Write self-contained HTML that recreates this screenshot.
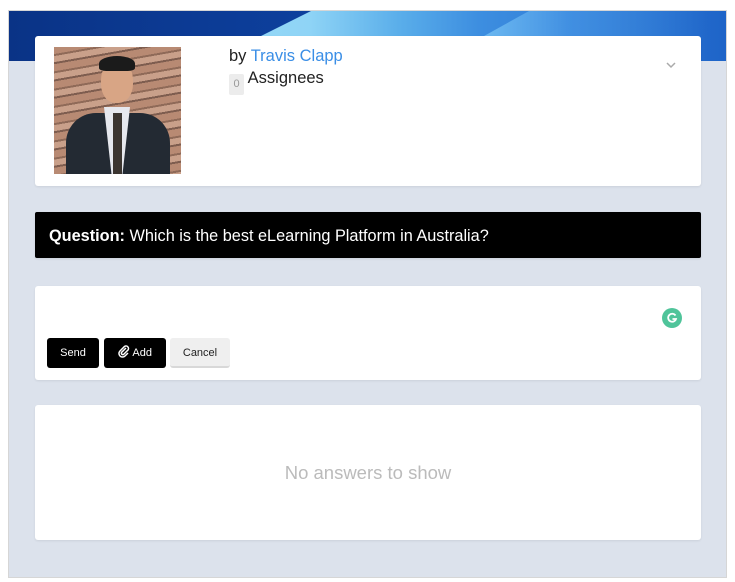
<!DOCTYPE html>
<html><head><meta charset="utf-8"><style>
*{box-sizing:border-box;margin:0;padding:0}
body{width:735px;height:582px;background:#fff;font-family:"Liberation Sans",Arial,sans-serif;position:relative;overflow:hidden}
.frame{position:absolute;left:8px;top:10px;width:719px;height:568px;border:1px solid #d6d6d6;background:#dce2ec;overflow:hidden}
.hdr{position:absolute;left:0;top:0;width:100%;height:50px;background:linear-gradient(90deg,#0a3386 0%,#0d3f9c 40%,#0d47aa 100%)}
.l1{position:absolute;left:0;top:0;width:100%;height:50px;background:linear-gradient(90deg,#a8e4fa 0px,#8fd4f6 300px,#5aaeea 390px,#3d8ee0 470px,#1e64c8 100%);clip-path:polygon(302px 0,100% 0,100% 50px,202px 50px)}
.l2{position:absolute;left:0;top:0;width:100%;height:50px;background:linear-gradient(90deg,rgba(150,210,245,.0) 0,rgba(120,195,245,.75) 480px,rgba(80,160,235,.5) 560px,rgba(30,90,200,0) 700px);clip-path:polygon(520px 0,100% 0,100% 50px,430px 50px)}
.card{position:absolute;background:#fff;border-radius:3px;box-shadow:0 1px 2px rgba(0,0,0,.08)}
.photo{position:absolute;left:19px;top:11px;width:127px;height:127px;background:repeating-linear-gradient(170deg,#b88a73 0 7px,#8f6a58 7px 9px,#c9a08a 9px 15px,#7e5d4f 15px 17px);overflow:hidden}
.head{position:absolute;left:47px;top:14px;width:32px;height:42px;border-radius:45%;background:#d8a585}
.hair{position:absolute;left:45px;top:9px;width:36px;height:15px;border-radius:50% 50% 20% 20%;background:#1b1b1b}
.suit{position:absolute;left:12px;top:66px;width:104px;height:70px;border-radius:30px 30px 0 0;background:#232a33}
.shirt{position:absolute;left:50px;top:60px;width:26px;height:70px;background:#e6e8ee;clip-path:polygon(0 0,100% 0,70% 100%,30% 100%)}
.tie{position:absolute;left:59px;top:66px;width:9px;height:62px;background:#3b3530}
.btn{position:absolute;top:52px;height:30px;border-radius:3px;font-size:11px;line-height:30px;text-align:center}
</style></head><body>
<div class="frame">
<div class="hdr"></div><div class="l1"></div><div class="l2"></div>
<div class="card" style="left:26px;top:25px;width:666px;height:150px">
 <div class="photo"><div class="suit"></div><div class="shirt"></div><div class="tie"></div><div class="head"></div><div class="hair"></div></div>
 <div style="position:absolute;left:194px;top:11px;font-size:16.5px;color:#222">by <span style="color:#3a8ee6">Travis Clapp</span></div>
 <div style="position:absolute;left:194px;top:33px;font-size:16.5px;color:#222"><span style="display:inline-block;background:#ececec;color:#999;font-size:11px;width:15px;height:21px;line-height:21px;text-align:center;border-radius:2px;vertical-align:-4px">0</span> Assignees</div>
 <svg style="position:absolute;left:631px;top:26px" width="10" height="7"><path d="M1 1L5 5L9 1" fill="none" stroke="#aaa" stroke-width="1.5"/></svg>
</div>
<div class="card" style="left:26px;top:201px;width:666px;height:46px;background:#000;border-radius:2px">
 <div style="position:absolute;left:14px;top:15px;font-size:16.3px;color:#fff"><b>Question:</b> Which is the best eLearning Platform in Australia?</div>
</div>
<div class="card" style="left:26px;top:275px;width:666px;height:94px">
 <div style="position:absolute;left:627px;top:22px;width:20px;height:20px;border-radius:50%;background:#4fc49a"></div>
 <svg style="position:absolute;left:631px;top:26px" width="12" height="12"><path d="M9.5 3.5A4 4 0 1 0 10 7H6.5" fill="none" stroke="#fff" stroke-width="1.8"/></svg>
 <div class="btn" style="left:12px;width:52px;background:#000;color:#fff">Send</div>
 <div class="btn" style="left:69px;width:62px;background:#000;color:#fff"><svg width="12" height="13" style="vertical-align:-2px" viewBox="0 0 12 13"><path d="M8 3L3.5 7.5a1.5 1.5 0 0 0 2 2L10 5a2.5 2.5 0 0 0-3.5-3.5L2 6a3.5 3.5 0 0 0 5 5l3-3" fill="none" stroke="#fff" stroke-width="1.5"/></svg> Add</div>
 <div class="btn" style="left:135px;width:60px;background:#efefef;color:#222;border-bottom:2px solid #d8d8d8">Cancel</div>
</div>
<div class="card" style="left:26px;top:394px;width:666px;height:135px">
 <div style="position:absolute;left:0;width:100%;top:57px;text-align:center;font-size:18.5px;color:#bbb">No answers to show</div>
</div>
</div>
</body></html>
